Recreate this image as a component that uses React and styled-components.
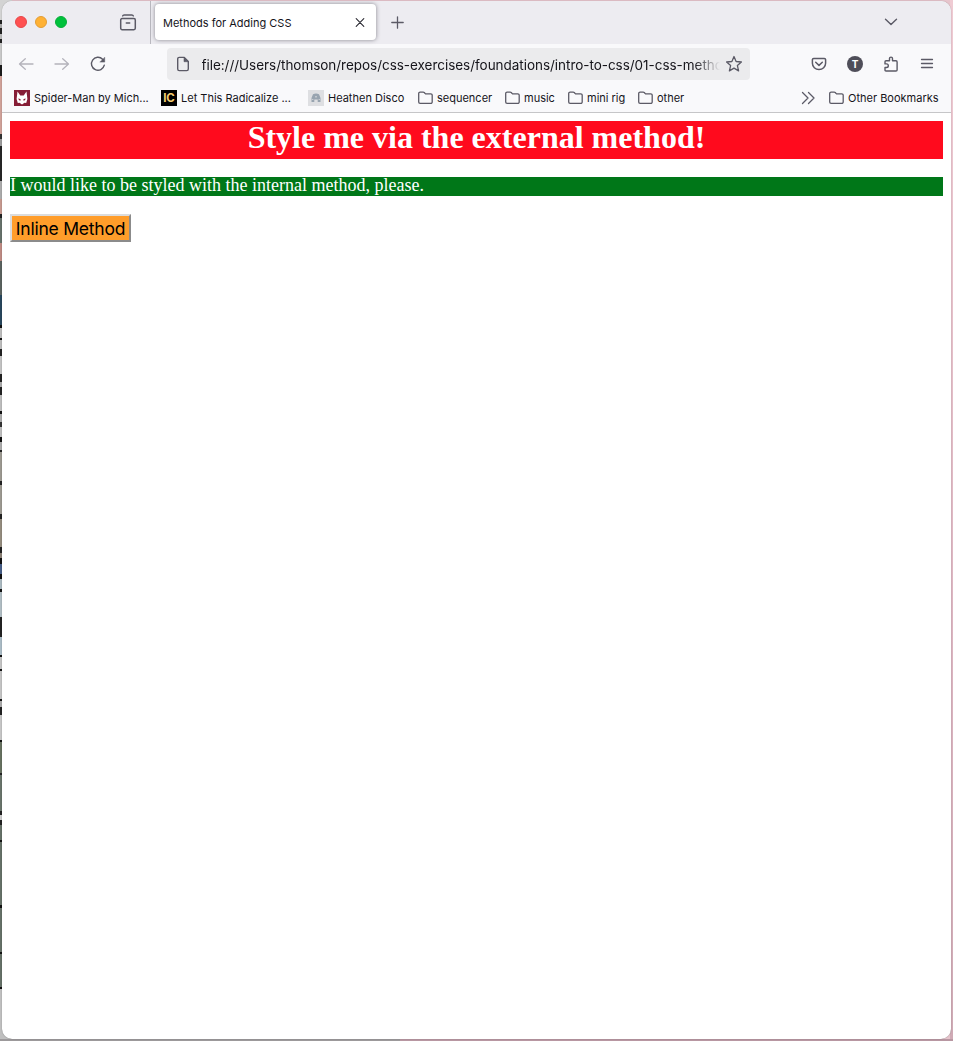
import React from 'react';
import styled, { createGlobalStyle } from 'styled-components';

const GlobalStyle = createGlobalStyle`
  * { box-sizing: border-box; }
  body { margin: 0; overflow: hidden; }
`;

const Desktop = styled.div`
  width: 953px;
  height: 1041px;
  padding: 1px 2px 2px;
  background:
    linear-gradient(#efcbd3, #dcb5c1 60%, #cfaab5) right top / 3px 1039px no-repeat,
    linear-gradient(#9c999b, #9c999b) left bottom / 400px 2px no-repeat,
    linear-gradient(#b897a2, #b897a2) right bottom / 553px 2px no-repeat,
    linear-gradient(
      #d3d3d3 0 20px, #222 20px 24px, #aaa 24px 28px, #222 28px 34px, #bbb 34px 39px,
      #222 39px 43px, #c8c8c8 43px 65px, #1b1b1b 65px 76px, #cfa198 76px 134px,
      #333 134px 139px, #9a9a9a 139px 146px, #262626 146px 181px, #aaa 181px 199px,
      #c5988e 199px 214px, #222 214px 218px, #66716a 218px 243px, #bd8a82 243px 261px,
      #59615e 261px 295px, #27465c 295px 325px, #111 325px 328px, #bcbcbc 328px 338px,
      #111 338px 340px, #bbb 340px 349px, #222 349px 356px, #c1c1c1 356px 374px,
      #222 374px 382px, #aaa 382px 387px, #222 387px 395px, #bcbcbc 395px 411px,
      #111 411px 414px, #aaa 414px 422px, #333 422px 427px, #bdbdbd 427px 437px,
      #111 437px 442px, #aaa 442px 450px, #222 450px 452px, #9b9890 452px 481px,
      #222 481px 485px, #9b9890 485px 514px, #222 514px 519px, #938b7d 519px 547px,
      #222 547px 553px, #887f74 553px 558px, #111 558px 564px, #465d86 564px 574px,
      #111 574px 579px, #a9b8bf 579px 589px, #111 589px 592px, #afbcc2 592px 617px,
      #222 617px 637px, #a9bac4 637px 655px, #111 655px 657px, #c3c3c3 657px 669px,
      #111 669px 671px, #c3c3c3 671px 699px, #111 699px 701px, #aaa 701px 707px,
      #222 707px 715px, #c5c5c5 715px 740px, #111 740px 742px, #66705f 742px 773px,
      #222 773px 775px, #68736a 775px 811px, #222 811px 815px, #ccc 815px 820px,
      #222 820px 825px, #657067 825px 840px, #111 840px 842px, #657067 842px 905px,
      #111 905px 908px, #657067 908px 952px, #111 952px 954px, #657067 954px 987px,
      #111 987px 989px, #bfbfbf 989px 1041px
    ) left top / 12px 1041px no-repeat,
    #e7c5cd;
`;

const Window = styled.div`
  height: 1038px;
  border-radius: 10px;
  overflow: hidden;
  background: #fff;
  box-shadow: 0 0 1px rgba(0, 0, 0, 0.5);
  font-family: Inter, 'Liberation Sans', sans-serif;
  color: #15141a;
`;

const TabStrip = styled.div`
  display: flex;
  align-items: center;
  height: 43px;
  padding-bottom: 1px;
  background: #edecf1;
`;

const TrafficLights = styled.div`
  display: flex;
  gap: 8px;
  width: 104px;
  padding-left: 13px;
`;

const Light = styled.span`
  width: 12px;
  height: 12px;
  border-radius: 50%;
  background: ${(p) => p.$color};
  border: 1px solid ${(p) => p.$edge};
`;

const ViewButton = styled.div`
  display: flex;
  align-items: center;
  justify-content: center;
  align-self: stretch;
  width: 45px;
  margin-bottom: -1px;
  border-right: 1px solid #b9b8bf;
`;

const Tab = styled.div`
  display: flex;
  align-items: center;
  justify-content: space-between;
  width: 221px;
  height: 36px;
  margin-left: 4px;
  padding: 2px 11px 0 8px;
  border-radius: 4px;
  background: #fff;
  box-shadow: 0 0 4px rgba(80, 78, 90, 0.65);
  font-size: 11px;
`;

const Label = styled.span`
  white-space: nowrap;
`;

const NewTab = styled.div`
  display: flex;
  margin-left: 15px;
  padding-top: 1px;
`;

const TabList = styled.div`
  display: flex;
  margin-left: auto;
  margin-right: 53px;
`;

const Toolbar = styled.div`
  display: flex;
  align-items: center;
  height: 40px;
  padding: 0 16px;
  background: #f9f9fb;
`;

const NavButtons = styled.div`
  display: flex;
  gap: 20px;
  width: 149px;
`;

const AddressBar = styled.div`
  display: flex;
  align-items: center;
  width: 583px;
  height: 32px;
  padding: 0 7px 0 8px;
  border-radius: 4px;
  background: #ebebed;
`;

const Address = styled.div`
  width: 519px;
  margin-left: 10.5px;
  margin-right: 5px;
  padding-top: 1px;
  overflow: hidden;
  white-space: nowrap;
  font-size: 13.5px;
  letter-spacing: -0.035px;
  mask-image: linear-gradient(to left, transparent, #000 26px);
`;

const Actions = styled.div`
  display: flex;
  gap: 20px;
  margin-left: auto;
`;

const Avatar = styled.span`
  display: flex;
  align-items: center;
  justify-content: center;
  width: 16px;
  height: 16px;
  border-radius: 50%;
  background: #4f4e59;
  color: #fff;
  font-size: 10px;
  font-weight: 700;
`;

const Bookmarks = styled.div`
  display: flex;
  align-items: center;
  height: 29px;
  padding: 0 12px;
  border-bottom: 1px solid #c6c6c8;
  background: #f9f9fb;
  font-size: 11px;
`;

const Bookmark = styled.div`
  display: flex;
  align-items: center;
  gap: 4px;
  width: ${(p) => p.$width}px;
`;

const Overflow = styled.div`
  display: flex;
  margin-left: auto;
  margin-right: 14px;
`;

const Favicon = styled.span`
  display: flex;
  align-items: center;
  justify-content: center;
  width: 16px;
  height: 16px;
  background: ${(p) => p.$bg};
  color: #f4cd72;
  font: 700 11.5px Inter, sans-serif;
`;

const Page = styled.main`
  padding: 8px;
  font-family: 'Liberation Serif', 'Times New Roman', serif;
`;

const Heading = styled.h1`
  height: 38px;
  margin: 0 0 18px;
  background: #ff0a1d;
  color: #fff;
  font-size: 32px;
  line-height: 32px;
  text-align: center;
`;

const Paragraph = styled.p`
  height: 19px;
  margin: 0 0 18px;
  background: #007718;
  color: #fff;
  font-size: 18px;
  line-height: 17px;
`;

const MethodButton = styled.button`
  display: block;
  width: 121px;
  height: 28px;
  padding: 1px 0 0;
  border: 2px solid;
  border-color: #dcdcdc #8b8b8b #8b8b8b #dcdcdc;
  background: #ff9d2a;
  color: #000;
  font: 17.5px/24px Inter, sans-serif;
  letter-spacing: -0.22px;
  white-space: nowrap;
`;

const Svg = styled.svg`
  flex: none;
  fill: none;
  stroke-linecap: round;
  stroke-linejoin: round;
`;

const Icon = ({ w = 16, h = 16, color = '#5b5a66', stroke = 1.3, children }) => (
  <Svg width={w} height={h} viewBox={`0 0 ${w} ${h}`} stroke={color} strokeWidth={stroke}>
    {children}
  </Svg>
);

const FolderIcon = () => (
  <Icon w={15} h={16}>
    <path d="M.7 12V3.5A1.4 1.4 0 0 1 2.1 2.1h3.1c.4 0 .7.1 1 .4l1.3 1.4h5.3a1.4 1.4 0 0 1 1.4 1.4V12a1.4 1.4 0 0 1-1.4 1.4H2.1A1.4 1.4 0 0 1 .7 12z" />
  </Icon>
);

const folders = [
  ['sequencer', 87],
  ['music', 63],
  ['mini rig', 70],
  ['other', 60],
];

export default function App() {
  return (
    <Desktop>
      <GlobalStyle />
      <Window>
        <TabStrip>
          <TrafficLights>
            <Light $color="#ff5151" $edge="#e7474a" />
            <Light $color="#ffb134" $edge="#e39d35" />
            <Light $color="#00c13c" $edge="#08ad39" />
          </TrafficLights>
          <ViewButton>
            <Icon w={18} h={18} stroke={1.5}>
              <path d="M3.7 1.9Q4 .9 5.2.9h7.6q1.2 0 1.5 1M1.7 6a1.4 1.4 0 0 1 1.4-1.4h11.8A1.4 1.4 0 0 1 16.3 6v8.3a1.4 1.4 0 0 1-1.4 1.4H3.1a1.4 1.4 0 0 1-1.4-1.4zM7.3 9h3.4" />
            </Icon>
          </ViewButton>
          <Tab>
            <Label>Methods for Adding CSS</Label>
            <Icon w={10} h={10} color="#2b2a33" stroke={1.1}><path d="M1.2.7l7.6 7.6M8.8.7L1.2 8.3" /></Icon>
          </Tab>
          <NewTab>
            <Icon w={13} h={13}><path d="M6.5.8v11.4M.8 6.5h11.4" /></Icon>
          </NewTab>
          <TabList>
            <Icon w={14} h={10} stroke={1.4}><path d="M1.5 2.2L7 7.6l5.5-5.4" /></Icon>
          </TabList>
        </TabStrip>
        <Toolbar>
          <NavButtons>
            <Icon color="#b4b3bb"><path d="M15 8H1.5M7.3 2.8L1.5 8l5.8 5.2" /></Icon>
            <Icon color="#b4b3bb"><path d="M1 8h13.5M8.7 2.8L14.5 8l-5.8 5.2" /></Icon>
            <Icon stroke={1.4}>
              <path d="M14.3 9.2A6.5 6.5 0 1 1 12.6 3.2" />
              <path d="M14.7 1.6v4.5h-4.5z" fill="#5b5a66" strokeWidth=".5" />
            </Icon>
          </NavButtons>
          <AddressBar>
            <Icon stroke={1.4}>
              <path d="M2.7 3A1.6 1.6 0 0 1 4.3 1.4h5L13.3 5.4v7.6a1.6 1.6 0 0 1-1.6 1.6H4.3A1.6 1.6 0 0 1 2.7 13z" />
              <path d="M9 1.5v4.2h4.2z" fill="#5b5a66" strokeWidth=".6" />
            </Icon>
            <Address>file:///Users/thomson/repos/css-exercises/foundations/intro-to-css/01-css-methods/</Address>
            <Icon w={18} h={18}>
              <path d="M9 1.5l2.1 5 5.3.5-4 3.6 1.2 5.3L9 13.1l-4.6 2.8 1.2-5.3-4-3.6 5.3-.5z" />
            </Icon>
          </AddressBar>
          <Actions>
            <Icon stroke={1.5}>
              <path d="M2.7 2.5h10.6a1.3 1.3 0 0 1 1.3 1.3v3.5a6.6 6.3 0 0 1-13.2 0V3.8a1.3 1.3 0 0 1 1.3-1.3zM4.7 6.3L8 9.4l3.3-3.1" />
            </Icon>
            <Avatar>T</Avatar>
            <Icon stroke={1.4}>
              <path d="M2 7V5.8q0-1 1-1h3.5V2.600a1.500 1.500 0 0 1 3 0V4.800h3.500q1.100 0 1.100 1.100v8q0 1.100-1.100 1.100H3q-1 0-1-1v-2.500h1.500a1.800 1.800 0 0 0 0-3.600H2z" />
            </Icon>
            <Icon><path d="M2.5 3.5h11M2.5 7.500h11M2.5 11.500h11" /></Icon>
          </Actions>
        </Toolbar>
        <Bookmarks>
          <Bookmark $width={147}>
            <Favicon $bg="#861d36">
              <Icon color="none"><path fill="#fff" d="M3.500 1.500l2.800 4h3.400l2.800-4 .9 7.500-1.200 4-1.700-.3L8 14.500l-2.500-1.800-1.700.3L2.600 9z" /><path fill="#861d36" d="M4.500 8.300l2.300 1.200-.5 1.200-1.500-.8zM11.500 8.300L9.200 9.500l.5 1.200 1.500-.8z" /></Icon>
            </Favicon>
            <Label>Spider-Man by Mich...</Label>
          </Bookmark>
          <Bookmark $width={147}>
            <Favicon $bg="#000">IC</Favicon>
            <Label>Let This Radicalize ...</Label>
          </Bookmark>
          <Bookmark $width={110}>
            <Favicon $bg="#dedfe2">
              <Icon color="none"><path fill="#98a4b0" d="M3.500 8L5 4.300Q8 2.800 11 4.300L12.500 8v4h-2.800V9.500H6.300V12H3.500z" /><path fill="#dedfe2" d="M7.400 6h1.200v1.500H7.400zM4.300 9h1v1h-1zM10.700 9h1v1h-1z" /></Icon>
            </Favicon>
            <Label>Heathen Disco</Label>
          </Bookmark>
          {folders.map(([name, width]) => (
            <Bookmark key={name} $width={width}><FolderIcon /><Label>{name}</Label></Bookmark>
          ))}
          <Overflow>
            <Icon w={14} h={14}><path d="M1.5 1.5L7 7l-5.5 5.5M7.5 1.5L13 7l-5.5 5.5" /></Icon>
          </Overflow>
          <Bookmark $width={110}><FolderIcon /><Label>Other Bookmarks</Label></Bookmark>
        </Bookmarks>
        <Page>
          <Heading>Style me via the external method!</Heading>
          <Paragraph>I would like to be styled with the internal method, please.</Paragraph>
          <MethodButton>Inline Method</MethodButton>
        </Page>
      </Window>
    </Desktop>
  );
}
